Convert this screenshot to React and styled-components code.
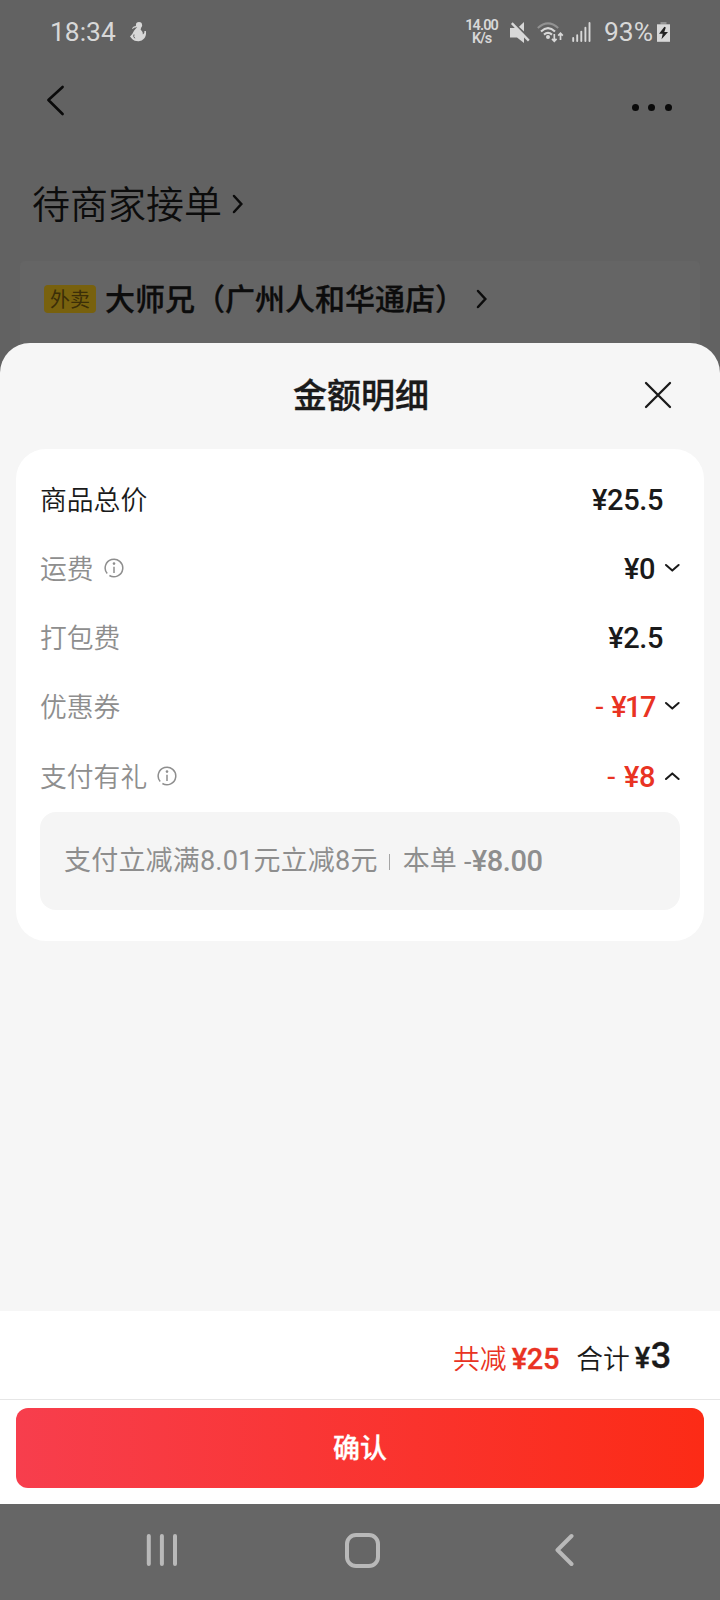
import styled, { createGlobalStyle } from "styled-components"

const rows = [
  { label: "商品总价", value: "¥25.5", dark: true },
  { label: "运费", value: "¥0", info: true, arrow: "down" },
  { label: "打包费", value: "¥2.5" },
  { label: "优惠券", value: "¥17", minus: true, arrow: "down", tight: true },
  { label: "支付有礼", value: "¥8", minus: true, info: true, arrow: "up" },
]

const Chevron = () => (
  <svg width="12" height="22" viewBox="0 0 12 22">
    <path
      d="M2 3l7.3 8L2 19"
      fill="none"
      stroke="currentColor"
      strokeWidth="2.5"
      strokeLinecap="round"
    />
  </svg>
)

const Arrow = ({ up }) => (
  <svg width="16" height="10" viewBox="0 0 16 10">
    <path
      d={up ? "M2 8l6.3-5.6L14.6 8" : "M2 2l6.3 5.6L14.6 2"}
      fill="none"
      stroke="#1a1a1a"
      strokeWidth="2"
      strokeLinecap="round"
      strokeLinejoin="round"
    />
  </svg>
)

const InfoIcon = () => (
  <svg width="20" height="20" viewBox="0 0 20 20" fill="none" stroke="#8e8e8e">
    <path d="M3.2 15.6A8.8 8.8 0 1 1 5.4 17.5" strokeWidth="1.5" />
    <path d="M10 8.8v6.2" strokeWidth="1.5" />
    <circle cx="10" cy="5.6" r="1.3" fill="#8e8e8e" stroke="none" />
  </svg>
)

const StatusBar = () => (
  <Status>
    <StatusText>18:34</StatusText>
    <MascotIcon width="17" height="20" viewBox="0 0 17 20">
      <circle cx="9" cy="3.2" r="3.1" />
      <path d="M2 6.2Q4 3.6 7 4.2L6 5.6Q4 5.4 2.8 7z" />
      <path d="M6.5 5.8h4.6l-.5 1.6q2.2 1.8 2.3 5 2-1.2 1.5-3.4h1.5q.8 5-2 7.8Q12 19.4 8.2 19.2 4 19.2 2.4 17.2L0 14.4q2.6-2 4-5.6z" />
      <path d="M4 12.5q-1 2 .8 3.8" fill="none" stroke="#626262" />
    </MascotIcon>
    <NetSpeed>
      <span>14.00</span>
      <span>K/s</span>
    </NetSpeed>
    <MuteIcon width="20" height="21" viewBox="0 0 20 21">
      <path d="M0 6h6.5L14 14v7L7 15.4H0z" />
      <path d="M9 4.8L14 0v9.6z" />
      <path d="M1.8 1.2L18.8 18.6" stroke="#d8d8d8" strokeWidth="2.4" />
    </MuteIcon>
    <WifiIcon width="27" height="21" viewBox="0 0 27 21" fill="none">
      <path d="M.8 6Q11 -3.2 21.2 6" stroke="#929292" strokeWidth="2" />
      <path d="M4 9.4Q11 3 18 9.4" stroke="#d8d8d8" strokeWidth="2.1" />
      <path d="M7 12.6Q11 9 15 12.6" stroke="#d8d8d8" strokeWidth="2.1" />
      <circle cx="11" cy="15" r="2" fill="#d8d8d8" />
      <path
        d="M17.3 12v7M15 16.8l2.3 2.4 2.3-2.4M23.5 18v-6.6M21.2 13.6l2.3-2.4 2.3 2.4"
        stroke="#d8d8d8"
        strokeWidth="1.7"
      />
    </WifiIcon>
    <SignalIcon width="19" height="20" viewBox="0 0 19 20">
      <path
        d="M1.2 16v3M5.2 13.2v5.8M9.3 9.6v9.4M13.4 5.8v13.2M17.5 1v18"
        stroke="#d8d8d8"
        strokeWidth="1.9"
        strokeLinecap="round"
      />
    </SignalIcon>
    <StatusText>93%</StatusText>
    <BatteryIcon width="13" height="20" viewBox="0 0 13 20">
      <path d="M3.5 0h6v2.5h-6z" fill="#929292" />
      <path d="M0 2.3h13v17.5H0z" />
      <path d="M7.4 4.8L2 11.8h3.7L4.5 17.2 11 10H7.3l1.5-4.4z" fill="#222" />
    </BatteryIcon>
  </Status>
)

const App = () => {
  return (
    <Screen>
      <GlobalStyle />
      <Page>
        <StatusBar />
        <Header>
          <svg width="20" height="32" viewBox="0 0 20 32">
            <path
              d="M16.6 3L2.4 16l14.2 14"
              fill="none"
              stroke="#0a0a0a"
              strokeWidth="2.6"
              strokeLinecap="round"
              strokeLinejoin="round"
            />
          </svg>
          <Dots>
            <i />
            <i />
            <i />
          </Dots>
        </Header>
        <OrderState>
          <span>待商家接单</span>
          <Chevron />
        </OrderState>
        <Store>
          <Tag>外卖</Tag>
          <StoreName>大师兄（广州人和华通店）</StoreName>
          <Chevron />
        </Store>
      </Page>

      <Sheet>
        <SheetHeader>
          <h2>金额明细</h2>
          <svg width="28" height="28" viewBox="0 0 28 28">
            <path
              d="M2 2l24 24M26 2L2 26"
              stroke="#1a1a1a"
              strokeWidth="2.3"
              strokeLinecap="round"
            />
          </svg>
        </SheetHeader>
        <Details>
          {rows.map(({ label, value, dark, info, minus, arrow, tight }) => (
            <Row key={label}>
              <Label $dark={dark}>{label}</Label>
              {info && <InfoIcon />}
              <Amount $red={minus} $arrow={arrow} $tight={tight}>
                {minus && <Minus>-</Minus>}
                {value}
              </Amount>
              {arrow && <Arrow up={arrow === "up"} />}
            </Row>
          ))}
          <Promo>
            <span>支付立减满8.01元立减8元</span>
            <Divider />
            <span>本单</span>
            <PromoValue>
              -<b>¥8.00</b>
            </PromoValue>
          </Promo>
        </Details>
      </Sheet>

      <Footer>
        <Summary>
          <SumLabel $red>共减</SumLabel>
          <SumValue $red>¥25</SumValue>
          <SumLabel>合计</SumLabel>
          <SumValue>
            ¥<strong>3</strong>
          </SumValue>
        </Summary>
        <Confirm>确认</Confirm>
      </Footer>

      <NavBar>
        <svg width="32" height="34" viewBox="0 0 32 34">
          <path
            d="M2.8 3v28M15.9 3v28M29 3v28"
            stroke="#b9b9b9"
            strokeWidth="4"
            strokeLinecap="round"
          />
        </svg>
        <HomeKey />
        <svg width="20" height="34" viewBox="0 0 20 34">
          <path
            d="M16.5 3L2.5 17l14 14"
            fill="none"
            stroke="#b9b9b9"
            strokeWidth="4"
            strokeLinecap="round"
            strokeLinejoin="round"
          />
        </svg>
      </NavBar>
    </Screen>
  )
}

const GlobalStyle = createGlobalStyle`
  * {
    box-sizing: border-box;
  }
  body {
    margin: 0;
    background: #626262;
  }
  svg {
    display: block;
    flex: none;
  }
`

const Screen = styled.div`
  width: 720px;
  height: 1600px;
  display: flex;
  flex-direction: column;
  overflow: hidden;
  font-family: "Noto Sans CJK SC", sans-serif;
  font-weight: 350;
  color: #1a1a1a;
`

const Page = styled.div`
  height: 373px;
  flex: none;
  background: #626262;
  color: #0c0c0c;
`

const Status = styled.div`
  height: 64px;
  padding: 0 50px;
  display: flex;
  align-items: center;
  fill: #d8d8d8;
`

const StatusText = styled.span`
  font: 400 26.4px/30px Roboto, sans-serif;
  color: #d8d8d8;
`

const MascotIcon = styled.svg`
  margin-left: 14px;
`

const NetSpeed = styled.div`
  margin-left: auto;
  display: flex;
  flex-direction: column;
  align-items: center;
  padding-bottom: 1px;
  font: 600 14.5px/13px Roboto, sans-serif;
  letter-spacing: -0.9px;
  color: #d8d8d8;
`

const MuteIcon = styled.svg`
  margin-left: 12px;
`

const WifiIcon = styled.svg`
  margin-left: 7px;
`

const SignalIcon = styled.svg`
  margin: 0 13px 0 8px;
`

const BatteryIcon = styled.svg`
  margin-left: 4px;
`

const Header = styled.div`
  height: 72px;
  padding: 0 48px 0 46px;
  display: flex;
  align-items: center;
  justify-content: space-between;
`

const Dots = styled.div`
  display: flex;
  gap: 9.7px;
  padding-top: 15px;

  i {
    width: 7px;
    height: 7px;
    border-radius: 50%;
    background: #0a0a0a;
  }
`

const OrderState = styled.div`
  height: 125px;
  padding: 11px 32px 0;
  display: flex;
  align-items: center;
  gap: 10px;
  font-size: 38px;
  line-height: 50px;

  span {
    padding-bottom: 4px;
  }
`

const Store = styled.div`
  height: 112px;
  margin: 0 20px;
  padding: 24px 24px 0;
  display: flex;
  align-items: flex-start;
  background: #656565;
  border-radius: 5px;

  svg {
    margin: 3px 0 0 11px;
  }
`

const Tag = styled.span`
  width: 52px;
  height: 28px;
  flex: none;
  font-size: 20px;
  line-height: 27px;
  font-weight: 400;
  text-align: center;
  color: #3b2e08;
  background: #78610e;
  border-radius: 4px;
`

const StoreName = styled.span`
  margin-left: 9px;
  font-size: 30px;
  line-height: 24px;
  font-weight: 500;
  -webkit-text-stroke: 0.3px currentColor;
`

const Sheet = styled.section`
  height: 968px;
  flex: none;
  margin-top: -30px;
  padding: 0 16px;
  position: relative;
  background: #f6f6f6;
  border-radius: 30px 30px 0 0;
`

const SheetHeader = styled.header`
  height: 106px;
  padding: 0 32px 0 277px;
  display: flex;
  align-items: center;
  justify-content: space-between;

  h2 {
    margin: 0;
    padding-bottom: 4px;
    font-size: 34px;
    line-height: 48px;
    font-weight: 500;
    -webkit-text-stroke: 0.4px currentColor;
  }
  svg {
    margin-top: -2px;
  }
`

const Details = styled.div`
  height: 492px;
  padding: 16px 24px 0;
  background: #fff;
  border-radius: 30px;
`

const Row = styled.div`
  height: 69px;
  display: flex;
  align-items: center;

  &:nth-child(5) {
    padding-top: 2px;
  }
  & > svg {
    margin: -2px 0 0 10px;
  }
  & > span + svg:last-child {
    margin: -2px 0 0 9px;
  }
`

const Label = styled.span`
  padding-bottom: 1px;
  font-size: 26.8px;
  line-height: 38px;
  color: ${({ $dark }) => ($dark ? "#1a1a1a" : "#8e8e8e")};
`

const Amount = styled.span`
  margin-left: auto;
  margin-right: ${({ $arrow }) => ($arrow ? 0 : "17px")};
  font: 500 29px/38px Roboto, sans-serif;
  letter-spacing: ${({ $tight }) => ($tight ? "-1.5px" : "-0.4px")};
  color: ${({ $red }) => ($red ? "#e93323" : "#1a1a1a")};
`

const Minus = styled.span`
  margin-right: 9px;
  font-weight: 400;
`

const Promo = styled.div`
  height: 98px;
  margin-top: 2px;
  padding: 0 24px;
  display: flex;
  align-items: center;
  font-family: Roboto, "Noto Sans CJK SC", sans-serif;
  font-weight: 400;
  font-size: 27px;
  line-height: 40px;
  letter-spacing: 0.2px;
  color: #8e8e8e;
  background: #f5f5f5;
  border-radius: 16px;
`

const Divider = styled.i`
  width: 1px;
  height: 16px;
  margin: 2px 13px 0 11px;
  background: #a5a5a5;
`

const PromoValue = styled.span`
  margin-left: 7px;

  b {
    font-size: 29px;
    font-weight: 500;
    letter-spacing: -0.4px;
  }
`

const Footer = styled.footer`
  height: 193px;
  flex: none;
  background: #fff;
`

const Summary = styled.div`
  height: 89px;
  padding: 0 49px 0 0;
  display: flex;
  align-items: center;
  justify-content: flex-end;
  border-bottom: 1px solid #e6e6e6;
`

const SumLabel = styled.span`
  padding-top: 5px;
  font-size: 26.8px;
  line-height: 38px;
  color: ${({ $red }) => ($red ? "#e93323" : "#1a1a1a")};
`

const SumValue = styled.span`
  margin-left: 5px;
  margin-right: ${({ $red }) => ($red ? "17px" : 0)};
  padding-top: ${({ $red }) => ($red ? "7px" : "4px")};
  font: 500 29px/38px Roboto, sans-serif;
  letter-spacing: -0.3px;
  color: ${({ $red }) => ($red ? "#e93323" : "#1a1a1a")};
  -webkit-text-stroke: 0.3px currentColor;

  strong {
    margin-left: 1px;
    font-size: 36px;
    font-weight: 500;
  }
`

const Confirm = styled.button`
  display: block;
  width: 688px;
  height: 80px;
  margin: 8px auto 0;
  padding: 0 0 3px;
  border: 0;
  border-radius: 12px;
  font: 500 27px/40px "Noto Sans CJK SC", sans-serif;
  -webkit-text-stroke: 0.3px currentColor;
  color: #fff;
  background: linear-gradient(90deg, #f73e4d, #fc2b16);
`

const NavBar = styled.nav`
  height: 96px;
  flex: none;
  padding: 0 145px 4px 146px;
  display: flex;
  align-items: center;
  justify-content: space-between;
  background: #666;
`

const HomeKey = styled.i`
  width: 35px;
  height: 35px;
  margin-left: -8px;
  border: 4px solid #b9b9b9;
  border-radius: 11px;
`

export default App
